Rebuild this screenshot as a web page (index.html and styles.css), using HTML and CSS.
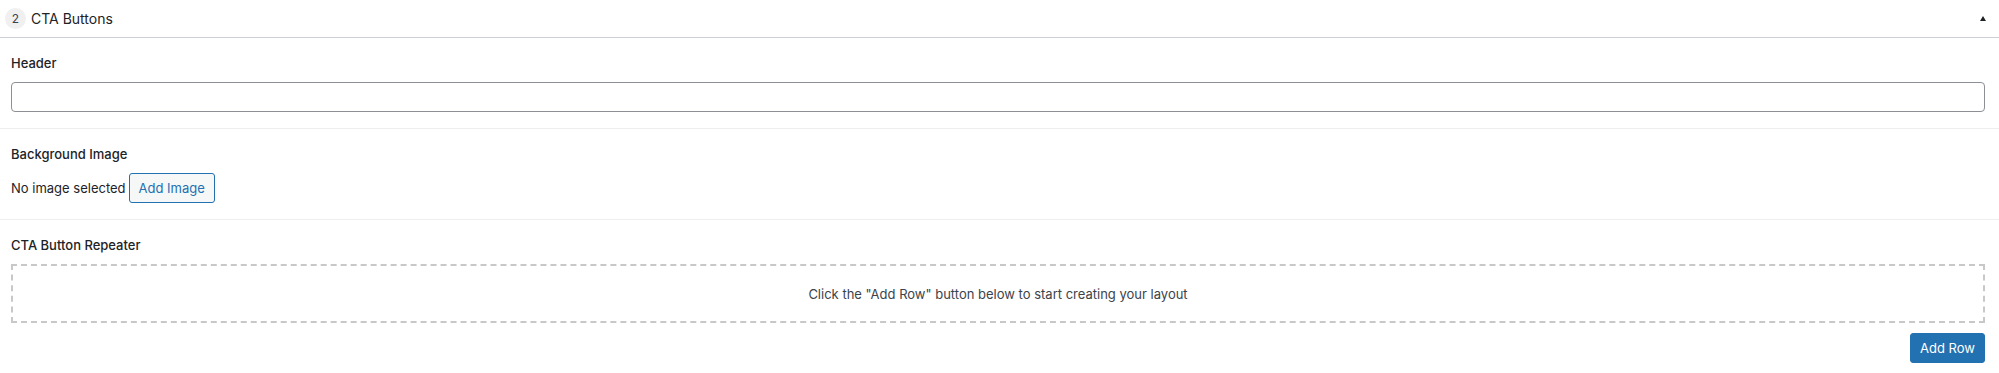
FILE: index.html
```html
<!DOCTYPE html>
<html lang="en">
<head>
    <meta charset="UTF-8">
    <meta name="viewport" content="width=device-width, initial-scale=1.0">
    <title>CTA Buttons</title>
    <link rel="stylesheet" href="styles.css">
</head>
<body>
    <div class="layout">
        <div class="layout-handle">
            <span class="layout-order">2</span>
            <span class="layout-title">CTA Buttons</span>
            <span class="layout-toggle"></span>
        </div>

        <div class="field">
            <label class="field-label">Header</label>
            <input class="text-input" type="text">
        </div>

        <div class="field">
            <label class="field-label">Background Image</label>
            <div class="image-row">
                <span>No image selected</span>
                <button class="btn">Add Image</button>
            </div>
        </div>

        <div class="field field-last">
            <label class="field-label">CTA Button Repeater</label>
            <div class="repeater-empty">Click the "Add Row" button below to start creating your layout</div>
            <div class="repeater-actions">
                <button class="btn btn-primary">Add Row</button>
            </div>
        </div>
    </div>
</body>
</html>
```

FILE: styles.css
```css
body {
    margin: 0;
    padding: 0;
    background: #fff;
    color: #1d2327;
    font-family: Inter, "Liberation Sans", sans-serif;
    font-size: 13px;
}
.layout-handle {
    display: flex;
    align-items: center;
    height: 37px;
    border-bottom: 1px solid #ccd0d4;
    padding: 0 13px 0 5px;
}
.layout-order {
    display: inline-flex;
    align-items: center;
    justify-content: center;
    width: 21px;
    height: 21px;
    border-radius: 50%;
    background: #f0f0f1;
    font-size: 12px;
    color: #3c434a;
    margin-right: 5px;
}
.layout-title {
    font-size: 14px;
    color: #1d2327;
    flex: 1;
}
.layout-toggle {
    width: 0;
    height: 0;
    border-left: 3px solid transparent;
    border-right: 3px solid transparent;
    border-bottom: 5px solid #1d2327;
}
.field {
    padding: 16px 14px 16px 11px;
    border-bottom: 1px solid #eeeeee;
}
.field-last {
    border-bottom: none;
    padding-bottom: 11px;
}
.field-label {
    display: block;
    line-height: 18px;
    font-weight: 500;
    margin-bottom: 10px;
    color: #1d2327;
}
.text-input {
    display: block;
    box-sizing: border-box;
    width: 100%;
    height: 30px;
    border: 1px solid #8c8f94;
    border-radius: 4px;
    margin: 0;
    font: inherit;
}
.image-row {
    display: flex;
    align-items: center;
    gap: 3px;
}
.btn {
    box-sizing: border-box;
    height: 30px;
    padding: 0 9px;
    font: inherit;
    font-size: 13px;
    border: 1px solid #2271b1;
    border-radius: 3px;
    background: #f6f7f7;
    color: #2271b1;
    cursor: pointer;
}
.btn-primary {
    background: #2271b1;
    color: #fff;
}
.repeater-empty {
    box-sizing: border-box;
    height: 59px;
    border: 2px dashed #c8c8c8;
    display: flex;
    align-items: center;
    justify-content: center;
    color: #3c434a;
}
.repeater-actions {
    display: flex;
    justify-content: flex-end;
    margin-top: 10px;
}
```
